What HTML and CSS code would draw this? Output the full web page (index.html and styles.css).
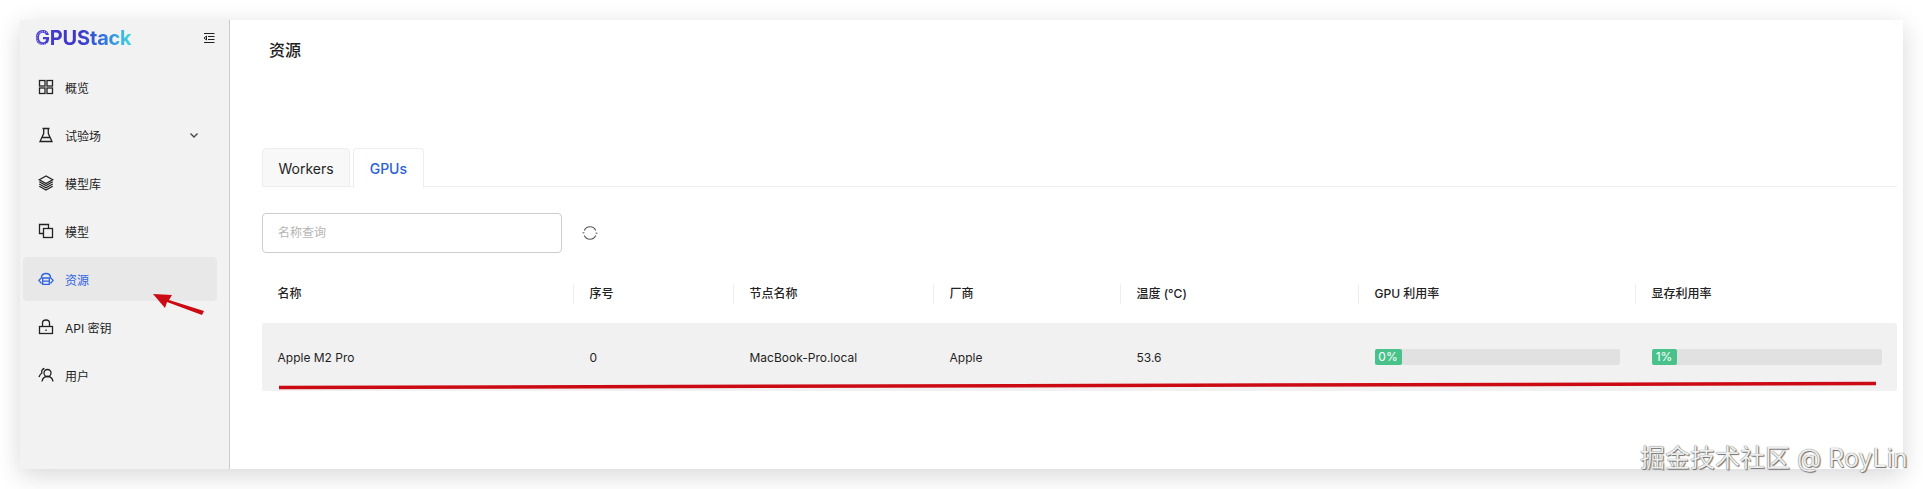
FILE: index.html
```html
<!DOCTYPE html>
<html lang="en">
<head>
    <meta charset="UTF-8">
    <title>GPUStack</title>
    <link rel="stylesheet" href="styles.css">
</head>
<body>
    <div class="app">
        <aside class="sidebar">
            <div class="logo-row">
                <span class="logo-wrap">
                    <span class="logo">GPUStack</span>
                    <svg class="logo-dots" viewBox="0 0 16 18"><path d="M12 3.800A6.400 6.400 0 1 0 12 14.200"/></svg>
                </span>
                <svg class="collapse" viewBox="0 0 12 12"><path d="M1 1.500h10.500M5 4.500h6.500M5 7.500h6.500M1 10.500h10.500M3.500 4L1 6l2.500 2z"/></svg>
            </div>
            <nav class="menu">
                <a class="menu-item">
                    <svg viewBox="0 0 16 16"><rect x="1.500" y="1.500" width="5.500" height="5.500"/><rect x="9" y="1.500" width="5.500" height="5.500"/><rect x="1.500" y="9" width="5.500" height="5.500"/><rect x="9" y="9" width="5.500" height="5.500"/></svg>
                    <span>概览</span>
                </a>
                <a class="menu-item">
                    <svg viewBox="0 0 16 16"><path d="M4.500 1.500h7M5.700 1.500v5L2 14.500h12l-3.700-8v-5M4 10.500h8"/></svg>
                    <span>试验场</span>
                    <svg class="chevron" viewBox="0 0 10 10"><path d="M1.500 3.500L5 7l3.500-3.500"/></svg>
                </a>
                <a class="menu-item">
                    <svg viewBox="0 0 16 16"><path d="M8 1L1.300 4.800 8 8.600l6.700-3.800zM1.300 6.800L8 10.600l6.700-3.800M1.300 9L8 12.800 14.700 9M1.300 11.200L8 15l6.700-3.800"/></svg>
                    <span>模型库</span>
                </a>
                <a class="menu-item">
                    <svg viewBox="0 0 16 16"><path d="M10.500 5.500v-4h-9v9h4"/><rect x="5.500" y="5.500" width="9" height="9"/></svg>
                    <span>模型</span>
                </a>
                <a class="menu-item active">
                    <svg viewBox="0 0 16 16"><path d="M3.500 12.500L.8 9.300 3.300 7C3.500 4 5.500 2.500 8 2.500s4.500 1.500 4.700 4.500l2.500 2.300-2.700 3.200M4.700 7h6.600v6.300H4.700zM4.700 10.100h6.600"/></svg>
                    <span>资源</span>
                </a>
                <a class="menu-item">
                    <svg viewBox="0 0 16 16"><rect x="1.500" y="7.500" width="13" height="7"/><path d="M4.500 7.500V4a3.500 3 0 0 1 7 0v3.500M8 10.500v1.500"/></svg>
                    <span>API 密钥</span>
                </a>
                <a class="menu-item">
                    <svg viewBox="0 0 16 16"><circle cx="9.500" cy="6" r="3.500"/><path d="M4 14.500c.5-3 2.700-5 5.500-5s5 2 5.500 5M6.500 1.500C4.500 1.800 3.300 3.500 3.800 6 2.500 7 1.500 8.500 1 10"/></svg>
                    <span>用户</span>
                </a>
            </nav>
        </aside>
        <main class="content">
            <h1 class="page-title">资源</h1>
            <div class="tabs">
                <div class="tab">Workers</div>
                <div class="tab active">GPUs</div>
            </div>
            <div class="toolbar">
                <div class="search">名称查询</div>
                <svg class="refresh" viewBox="0 0 16 16"><path d="M2.300 5.500A6.200 6.200 0 0 1 13.700 5.500M13.700 10.500A6.200 6.200 0 0 1 2.300 10.500"/><path class="refresh-nub" d="M1.500 7v1.500M14.500 7.500V9"/></svg>
            </div>
            <div class="gpu-table">
                <div class="row head">
                    <div class="cell">名称</div>
                    <div class="cell">序号</div>
                    <div class="cell">节点名称</div>
                    <div class="cell">厂商</div>
                    <div class="cell">温度 (°C)</div>
                    <div class="cell">GPU 利用率</div>
                    <div class="cell last">显存利用率</div>
                </div>
                <div class="row body">
                    <div class="cell">Apple M2 Pro</div>
                    <div class="cell">0</div>
                    <div class="cell">MacBook-Pro.local</div>
                    <div class="cell">Apple</div>
                    <div class="cell">53.6</div>
                    <div class="cell"><div class="bar"><div class="fill fill-gpu">0%</div></div></div>
                    <div class="cell"><div class="bar"><div class="fill fill-vram">1%</div></div></div>
                </div>
            </div>
        </main>
    </div>

    <!-- annotations drawn on top of the screenshot -->
    <svg class="marks" viewBox="0 0 1923 489">
        <path class="underline" d="M279 387.500L1100 385.500L1876 383.500"/>
        <path class="arrow" d="M153 294l19 1-3 5 35 11-2 4-35-13-2 6z"/>
    </svg>
    <div class="watermark">掘金技术社区 @ RoyLin</div>
</body>
</html>
```

FILE: styles.css
```css
body, html {
    height: 100%;
    margin: 0;
    padding: 0;
    background: #fff;
    overflow: hidden;
    font-family: Inter, 'Noto Sans CJK SC', sans-serif;
    color: #1f1f1f;
}
.app {
    display: flex;
    width: 1883px;
    height: 449px;
    margin: 20px 0 0 20px;
    background: #fff;
    box-shadow: 0 6px 24px rgba(0,0,0,0.16);
}
.sidebar {
    flex: none;
    box-sizing: border-box;
    width: 210px;
    background: #f2f2f2;
    border-right: 1px solid #c9c9c9;
    padding: 0 12px 0 3px;
}
.logo-row {
    display: flex;
    align-items: center;
    justify-content: space-between;
    height: 36px;
    padding: 0 2px 0 12px;
}
.logo-wrap {
    position: relative;
    display: block;
}
.logo {
    display: block;
    font-size: 20px;
    font-weight: 700;
    letter-spacing: -0.2px;
    background: linear-gradient(90deg, #4a3fd0 0%, #3c35c8 45%, #2f6fe0 70%, #3fdce0 100%);
    -webkit-background-clip: text;
    background-clip: text;
    color: transparent;
}
.logo-dots {
    position: absolute;
    top: 3px;
    left: 0;
    width: 16px;
    height: 18px;
    fill: none;
    stroke: #f2f2f2;
    stroke-width: 1;
    stroke-dasharray: 1 1.200;
}
.collapse {
    width: 12px;
    height: 12px;
    fill: none;
    stroke: #222;
    stroke-width: 1;
}
.menu {
    display: flex;
    flex-direction: column;
    gap: 4px;
    margin-top: 9px;
}
.menu-item {
    display: flex;
    align-items: center;
    height: 44px;
    padding: 0 18px 0 15px;
    border-radius: 4px;
    font-size: 12px;
    color: #222;
}
.menu-item svg {
    flex: none;
    width: 16px;
    height: 16px;
    margin-right: 11px;
    fill: none;
    stroke: #222;
    stroke-width: 1.300;
}
.menu-item .chevron {
    width: 10px;
    height: 10px;
    margin: 0 0 0 auto;
    stroke: #444;
    stroke-width: 1.400;
}
.menu-item.active {
    background: #e8e8e8;
    color: #2f63e0;
}
.menu-item.active svg {
    stroke: #2f63e0;
}
.content {
    flex: 1;
    min-width: 0;
    padding: 0 6px 0 32px;
}
.page-title {
    margin: 0;
    padding: 19px 7px 0;
    height: 128px;
    box-sizing: border-box;
    font-size: 16px;
    line-height: 22px;
    font-weight: 500;
}
.tabs {
    display: flex;
    gap: 3px;
    height: 39px;
    box-sizing: border-box;
    border-bottom: 1px solid #eceeef;
}
.tab {
    box-sizing: border-box;
    height: 39px;
    padding: 0 15.500px;
    line-height: 40px;
    font-size: 14px;
    border: 1px solid #eceeef;
    border-radius: 4px 4px 0 0;
    background: #f8f8f8;
}
.tab.active {
    height: 40px;
    background: #fff;
    border-bottom: none;
    color: #2a5fd6;
    font-weight: 500;
}
.toolbar {
    display: flex;
    align-items: center;
    gap: 20px;
    margin-top: 26px;
}
.search {
    box-sizing: border-box;
    width: 300px;
    height: 40px;
    padding: 0 15px;
    line-height: 38px;
    font-size: 12px;
    color: #b5b5b5;
    border: 1px solid #ccc;
    border-radius: 4px;
}
.refresh {
    width: 16px;
    height: 16px;
    fill: none;
    stroke: #555;
    stroke-width: 1.100;
}
.refresh-nub {
    stroke: #888;
    stroke-width: 1.800;
}
.row {
    display: grid;
    grid-template-columns: 312px 160px 200px 187px 238px 277px 262px;
    align-items: center;
}
.head {
    box-sizing: border-box;
    height: 70px;
    padding-top: 12px;
    font-size: 12px;
    font-weight: 500;
    color: #222;
}
.head .cell {
    border-right: 1px solid #eee;
    line-height: 20px;
}
.head .cell.last {
    border-right: none;
}
.body {
    height: 68px;
    background: #f1f1f1;
    border-radius: 2px;
    font-size: 12px;
    color: #1f1f1f;
}
.cell {
    padding: 0 16px 0 15.500px;
}
.bar {
    height: 16px;
    border-radius: 2px;
    background: #e1e1e1;
}
.fill {
    height: 16px;
    border-radius: 2px;
    background: #48c28a;
    color: #fff;
    font-size: 12px;
    line-height: 16px;
    text-align: center;
}
.fill-gpu {
    width: 27px;
}
.fill-vram {
    width: 25px;
}
.marks {
    position: absolute;
    top: 0;
    left: 0;
    width: 1923px;
    height: 489px;
    pointer-events: none;
}
.underline {
    fill: none;
    stroke: #cc0a14;
    stroke-width: 3.500;
}
.arrow {
    fill: #cc0a14;
}
.watermark {
    position: absolute;
    top: 442px;
    left: 1640px;
    font-size: 25px;
    line-height: 32px;
    white-space: nowrap;
    color: #eee;
    text-shadow: 0 0 1px #444, 1px 1px 1px #777;
}
```
